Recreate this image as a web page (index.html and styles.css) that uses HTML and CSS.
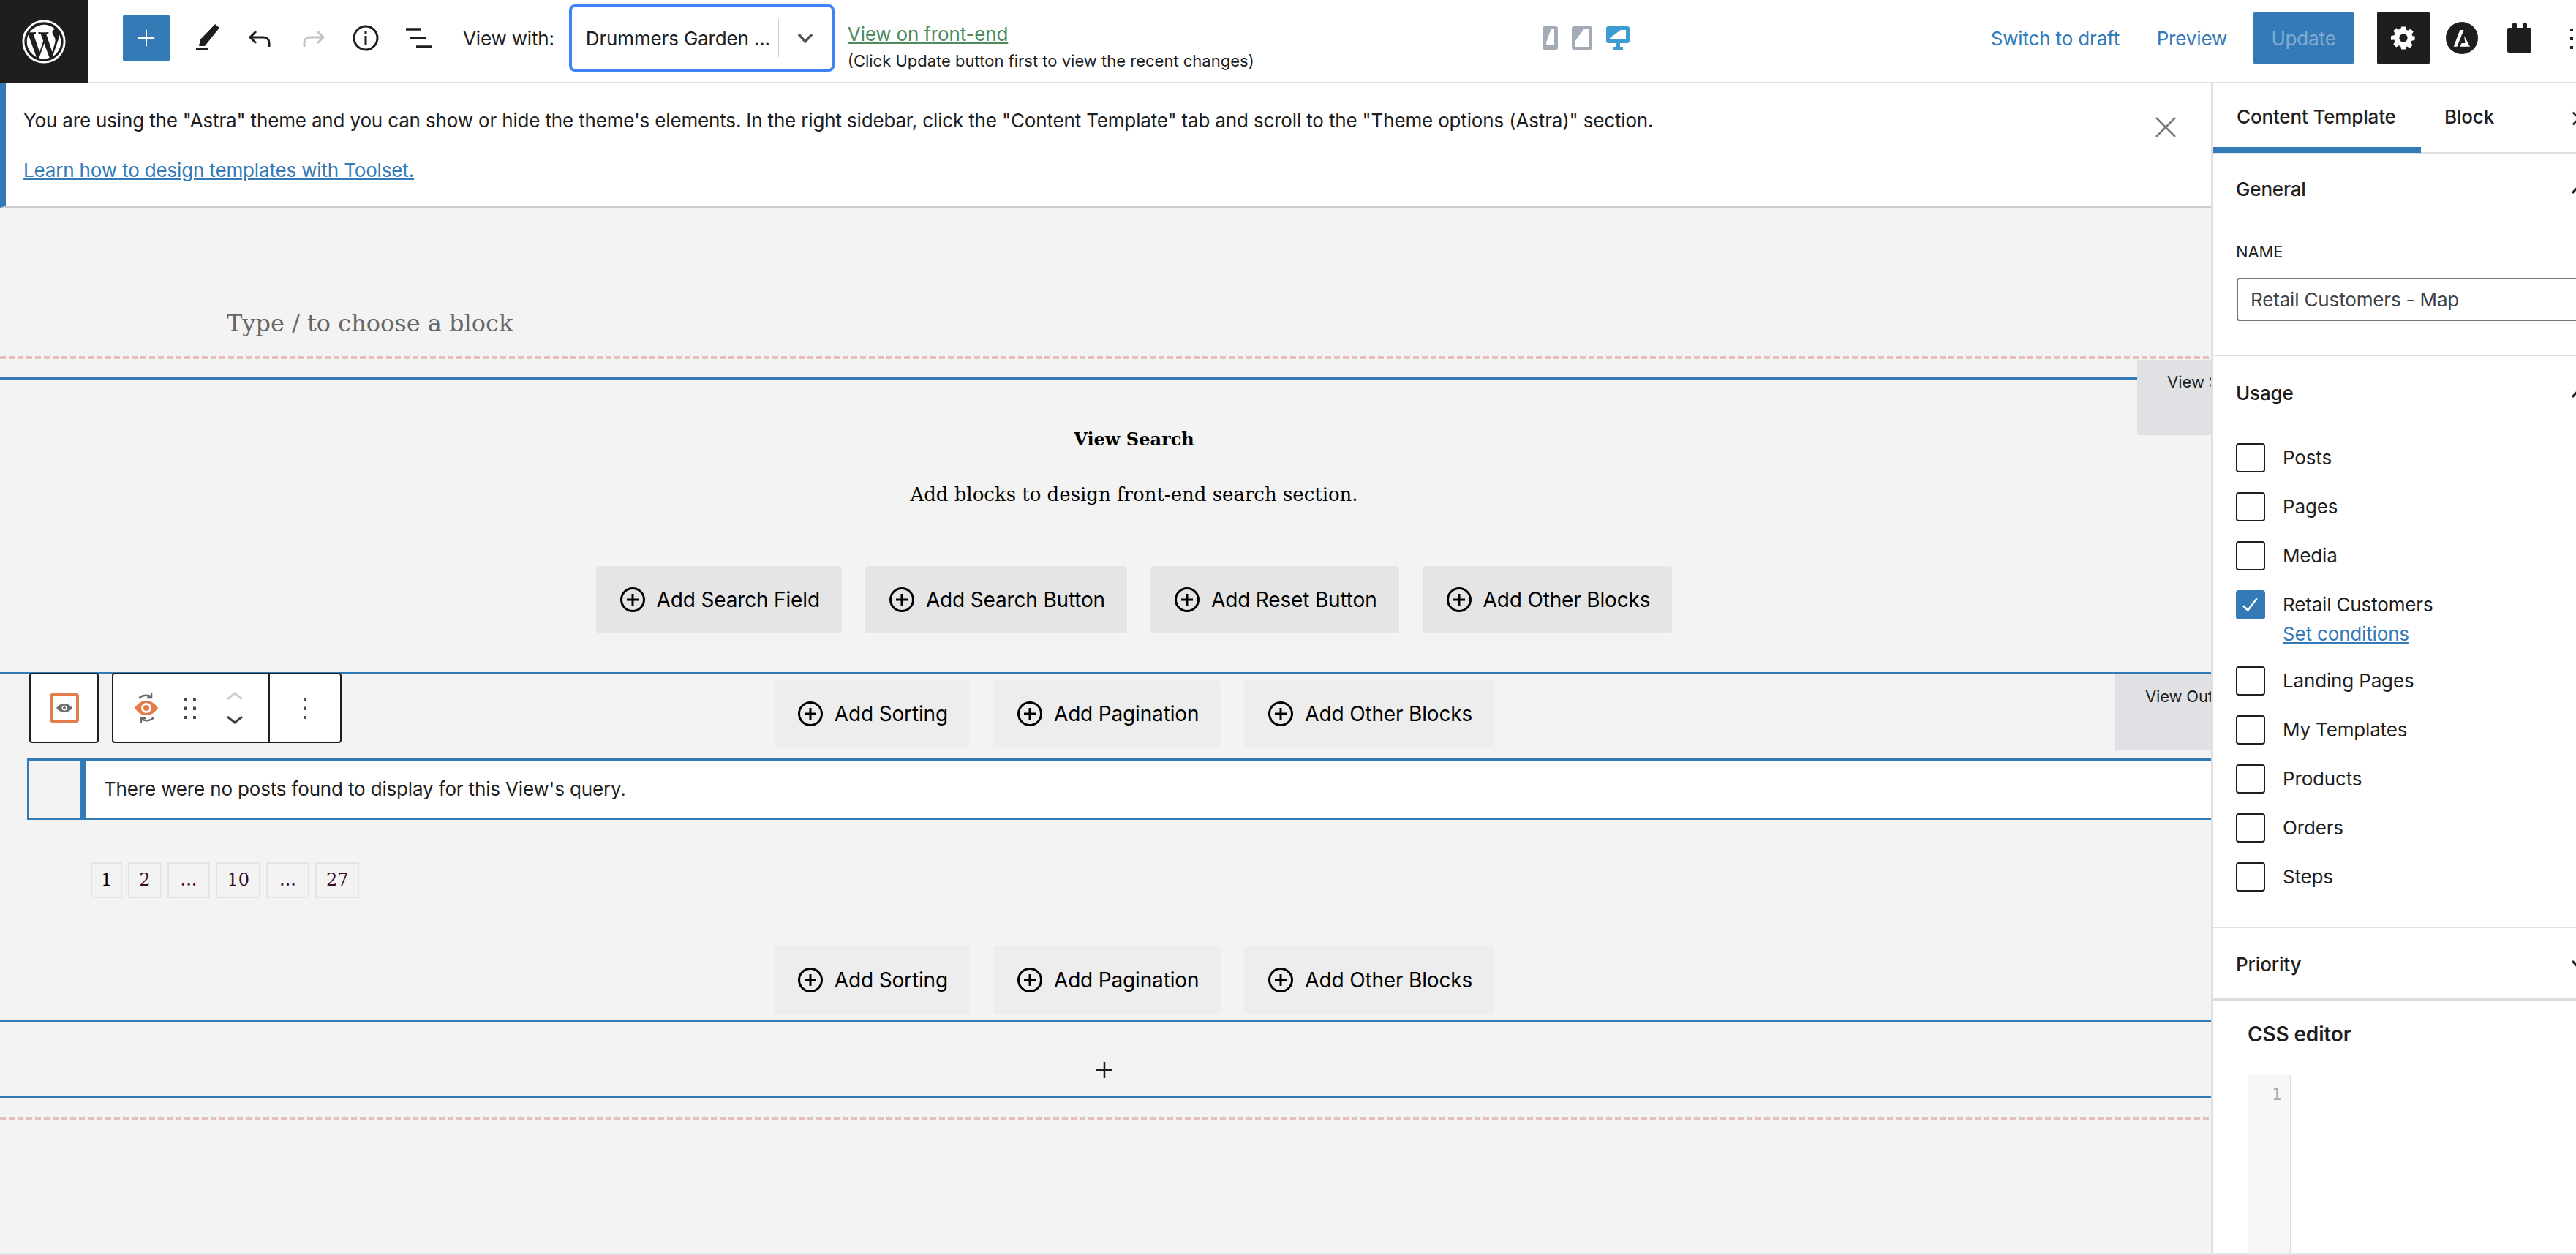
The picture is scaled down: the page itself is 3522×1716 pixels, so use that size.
FILE: index.html
```html
<!DOCTYPE html>
<html lang="en">
  <head>
    <meta charset="UTF-8" />
    <title>Edit Content Template</title>
    <link rel="stylesheet" href="styles.css">
  </head>
  <body>
    <div class="topbar">
      <a class="wp-logo" href="#">
        <svg viewBox="0 0 64 64" width="62" height="62"><circle cx="32" cy="32" r="29" fill="none" stroke="#fff" stroke-width="3"/><path fill="#fff" d="M8 32c0 9.5 5.5 17.700 13.500 21.600L10 22.300C8.700 25.300 8 28.600 8 32zm40.200-1.200c0-3-1.100-5-2-6.600-1.200-2-2.300-3.600-2.300-5.600 0-2.200 1.700-4.200 4-4.200h.3A24 24 0 0 0 11.900 19l1.500-.1c2.500 0 6.400-.3 6.400-.3 1.300-.1 1.400 1.800.1 2 0 0-1.300.1-2.700.2l8.700 25.900 5.200-15.700-3.700-10.200c-1.300-.1-2.500-.2-2.500-.2-1.300-.1-1.100-2.100.2-2 0 0 4 .3 6.300.3 2.500 0 6.400-.3 6.400-.3 1.300-.1 1.400 1.800.1 2 0 0-1.300.1-2.700.2l8.600 25.700 2.400-8c1-3.300 1.800-5.700 1.800-7.700zM32.400 34.300 25.200 55.200a24 24 0 0 0 14.800-.4l-.2-.3-7.400-20.200zM53.100 20.700c.1.800.2 1.600.2 2.500 0 2.400-.5 5.200-1.800 8.600L44.200 53a24 24 0 0 0 8.900-32.300z"/></svg>
      </a>
      <button class="add-btn">
        <svg viewBox="0 0 24 24" width="30" height="30"><path d="M12 3v18M3 12h18" stroke="#fff" stroke-width="1.600" fill="none"/></svg>
      </button>
      <svg class="tool pen" viewBox="0 0 32 36" width="32" height="36"><path fill="#1e1e1e" d="M26 0l6 5-20 25H4l2-9zM0 33h17v3H0z"/></svg>
      <svg class="tool undo" viewBox="0 0 34 24" width="34" height="24"><path d="M11 2 3 10l8 8M3 10h18c5 0 8 3 8 8v5" fill="none" stroke="#1e1e1e" stroke-width="3"/></svg>
      <svg class="tool redo" viewBox="0 0 34 24" width="34" height="24"><path d="M23 2l8 8-8 8M31 10H13c-5 0-8 3-8 8v5" fill="none" stroke="#c4c4c4" stroke-width="3"/></svg>
      <svg class="tool info" viewBox="0 0 36 36" width="36" height="36"><circle cx="18" cy="18" r="16" fill="none" stroke="#1e1e1e" stroke-width="3"/><path d="M18 15v12M18 8v4" stroke="#1e1e1e" stroke-width="3"/></svg>
      <svg class="tool list" viewBox="0 0 36 28" width="36" height="28"><path d="M0 2h21M6 14h21M14 26h22" stroke="#1e1e1e" stroke-width="3.500"/></svg>
      <span class="view-with">View with:</span>
      <div class="view-select">
        <span class="view-select-text">Drummers Garden ...</span>
        <span class="view-select-arrow">
          <svg viewBox="0 0 24 16" width="24" height="16"><path d="M3 3l9 10 9-10" fill="none" stroke="#555" stroke-width="3.500"/></svg>
        </span>
      </div>
      <div class="frontend-note">
        <a href="#">View on front-end</a>
        <span>(Click Update button first to view the recent changes)</span>
      </div>
      <div class="devices">
        <svg viewBox="0 0 21 32" width="21" height="32"><rect width="21" height="32" rx="3" fill="#a3acb6"/><rect x="5" y="3" width="11" height="23" fill="#fff"/><path d="M5 3h7L5 22z" fill="#a3acb6"/></svg>
        <svg viewBox="0 0 28 32" width="28" height="32"><rect width="28" height="32" rx="3" fill="#a3acb6"/><rect x="4" y="3" width="20" height="25" fill="#fff"/><path d="M4 3h13L4 21z" fill="#a3acb6"/></svg>
        <svg viewBox="0 0 32 32" width="32" height="32"><rect width="32" height="23" rx="3" fill="#3d9cd2"/><rect x="5" y="5" width="22" height="13" fill="#fff"/><path d="M5 5h15L5 16z" fill="#3d9cd2"/><path d="M13 23h6v5h4v4H9v-4h4z" fill="#3d9cd2"/></svg>
      </div>
      <a class="top-link draft" href="#">Switch to draft</a>
      <a class="top-link preview" href="#">Preview</a>
      <button class="update-btn">Update</button>
      <button class="gear-btn">
        <svg viewBox="0 0 24 24" width="34" height="34"><path fill="#fff" fill-rule="evenodd" d="M10 2h4l.6 2.900 1.800.8 2.500-1.600 2.800 2.800-1.600 2.500.8 1.800L23 11v4l-2.900.6-.8 1.800 1.600 2.500-2.800 2.800-2.500-1.600-.6.300L14 24h-4l-.6-2.900-1.800-.8-2.500 1.600-2.800-2.800 1.600-2.500-.8-1.800L0 15v-4l3.100-.6.800-1.800-1.600-2.500 2.800-2.800 2.500 1.600 1.800-.8zM12 9a4 4 0 1 0 0 8 4 4 0 0 0 0-8z" transform="translate(0 -1)"/></svg>
      </button>
      <svg class="astra" viewBox="0 0 44 44" width="44" height="44"><circle cx="22" cy="22" r="22" fill="#1e1e1e"/><path fill="#fff" d="M19.300 11h5.200L15.500 33.800h-4.800zM25 19l8 14.800H19.500l2-4.800h5z"/></svg>
      <svg class="plugin" viewBox="0 0 33 40" width="33" height="40"><path fill="#1e1e1e" d="M7 2a3 3 0 0 1 6 0v4h8V2a3 3 0 0 1 6 0v4h4a2 2 0 0 1 2 2v30a2 2 0 0 1-2 2H2a2 2 0 0 1-2-2V8a2 2 0 0 1 2-2h5z"/></svg>
      <svg class="more" viewBox="0 0 4 28" width="4" height="28"><path fill="#1e1e1e" d="M0 0h4v4H0zM0 12h4v4H0zM0 24h4v4H0z"/></svg>
    </div>

    <div class="layout">
      <div class="canvas">
        <div class="notice">
          <p>You are using the "Astra" theme and you can show or hide the theme's elements. In the right sidebar, click the "Content Template" tab and scroll to the "Theme options (Astra)" section.</p>
          <a href="#">Learn how to design templates with Toolset.</a>
          <svg class="notice-close" viewBox="0 0 30 30" width="30" height="30"><path d="M2 2l26 26M28 2 2 28" stroke="#777" stroke-width="2.500"/></svg>
        </div>

        <div class="placeholder">Type / to choose a block</div>
        <div class="dashed first"></div>

        <div class="search-section">
          <span class="section-tab tab-search">View Search</span>
          <h4>View Search</h4>
          <p>Add blocks to design front-end search section.</p>
          <div class="btn-row">
            <button class="add-block"><svg viewBox="0 0 36 36" width="36" height="36"><circle cx="18" cy="18" r="15.500" fill="none" stroke="#000" stroke-width="3"/><path d="M18 10v16M10 18h16" stroke="#000" stroke-width="3"/></svg>Add Search Field</button>
            <button class="add-block"><svg viewBox="0 0 36 36" width="36" height="36"><circle cx="18" cy="18" r="15.500" fill="none" stroke="#000" stroke-width="3"/><path d="M18 10v16M10 18h16" stroke="#000" stroke-width="3"/></svg>Add Search Button</button>
            <button class="add-block"><svg viewBox="0 0 36 36" width="36" height="36"><circle cx="18" cy="18" r="15.500" fill="none" stroke="#000" stroke-width="3"/><path d="M18 10v16M10 18h16" stroke="#000" stroke-width="3"/></svg>Add Reset Button</button>
            <button class="add-block"><svg viewBox="0 0 36 36" width="36" height="36"><circle cx="18" cy="18" r="15.500" fill="none" stroke="#000" stroke-width="3"/><path d="M18 10v16M10 18h16" stroke="#000" stroke-width="3"/></svg>Add Other Blocks</button>
          </div>
        </div>

        <div class="output-section">
          <span class="section-tab tab-output">View Output</span>

          <div class="block-toolbar">
            <div class="tb-group tb-one">
              <svg viewBox="0 0 40 40" width="40" height="40"><rect x="2" y="2" width="36" height="36" rx="2" fill="none" stroke="#e37c4a" stroke-width="4"/><path d="M9 20c3-4 7-6 11-6s8 2 11 6c-3 4-7 6-11 6s-8-2-11-6z" fill="#6b6b6b"/><circle cx="20" cy="20" r="3.500" fill="#fff"/><circle cx="20" cy="20" r="2" fill="#6b6b6b"/></svg>
            </div>
            <div class="tb-group tb-two">
              <div class="tb-main">
                <svg viewBox="0 0 32 40" width="32" height="40"><path d="M6 7c3-4 11-6 17-2M23 0v6h-6" fill="none" stroke="#6b6b6b" stroke-width="2.500"/><path d="M26 33c-3 4-11 6-17 2M9 40v-6h6" fill="none" stroke="#6b6b6b" stroke-width="2.500"/><path d="M0 20c5-7 10-10 16-10s11 3 16 10c-5 7-10 10-16 10S5 27 0 20z" fill="#e37c4a"/><circle cx="16" cy="20" r="7" fill="#fff"/><circle cx="16" cy="20" r="4" fill="#e37c4a"/></svg>
                <svg class="drag" viewBox="0 0 16 29" width="16" height="29"><path fill="#4a4a4a" d="M0 0h4v4.500H0zM12 0h4v4.500h-4zM0 12.500h4V17H0zM12 12.500h4V17h-4zM0 25h4v4H0zM12 25h4v4h-4z"/></svg>
                <div class="mover">
                  <svg viewBox="0 0 22 11" width="22" height="11"><path d="M1 10l10-8 10 8" fill="none" stroke="#ccc" stroke-width="3"/></svg>
                  <svg viewBox="0 0 22 11" width="22" height="11"><path d="M1 1l10 8 10-8" fill="none" stroke="#3d4450" stroke-width="3"/></svg>
                </div>
              </div>
              <div class="tb-more">
                <svg viewBox="0 0 4 29" width="4" height="29"><path fill="#4a4a4a" d="M0 0h4v4.500H0zM0 12.500h4V17H0zM0 25h4v4H0z"/></svg>
              </div>
            </div>
          </div>

          <div class="btn-row light">
            <button class="add-block"><svg viewBox="0 0 36 36" width="36" height="36"><circle cx="18" cy="18" r="15.500" fill="none" stroke="#000" stroke-width="3"/><path d="M18 10v16M10 18h16" stroke="#000" stroke-width="3"/></svg>Add Sorting</button>
            <button class="add-block"><svg viewBox="0 0 36 36" width="36" height="36"><circle cx="18" cy="18" r="15.500" fill="none" stroke="#000" stroke-width="3"/><path d="M18 10v16M10 18h16" stroke="#000" stroke-width="3"/></svg>Add Pagination</button>
            <button class="add-block"><svg viewBox="0 0 36 36" width="36" height="36"><circle cx="18" cy="18" r="15.500" fill="none" stroke="#000" stroke-width="3"/><path d="M18 10v16M10 18h16" stroke="#000" stroke-width="3"/></svg>Add Other Blocks</button>
          </div>

          <div class="no-posts">
            <div class="no-posts-side"></div>
            <div class="no-posts-text">There were no posts found to display for this View's query.</div>
          </div>

          <ul class="pagination">
            <li class="current">1</li>
            <li>2</li>
            <li class="dots">...</li>
            <li>10</li>
            <li class="dots">...</li>
            <li>27</li>
          </ul>

          <div class="btn-row light">
            <button class="add-block"><svg viewBox="0 0 36 36" width="36" height="36"><circle cx="18" cy="18" r="15.500" fill="none" stroke="#000" stroke-width="3"/><path d="M18 10v16M10 18h16" stroke="#000" stroke-width="3"/></svg>Add Sorting</button>
            <button class="add-block"><svg viewBox="0 0 36 36" width="36" height="36"><circle cx="18" cy="18" r="15.500" fill="none" stroke="#000" stroke-width="3"/><path d="M18 10v16M10 18h16" stroke="#000" stroke-width="3"/></svg>Add Pagination</button>
            <button class="add-block"><svg viewBox="0 0 36 36" width="36" height="36"><circle cx="18" cy="18" r="15.500" fill="none" stroke="#000" stroke-width="3"/><path d="M18 10v16M10 18h16" stroke="#000" stroke-width="3"/></svg>Add Other Blocks</button>
          </div>
        </div>

        <div class="appender">
          <svg viewBox="0 0 22 22" width="22" height="22"><path d="M11 0v22M0 11h22" stroke="#1e1e1e" stroke-width="2.500"/></svg>
        </div>
        <div class="dashed last"></div>
      </div>

      <div class="sidebar">
        <div class="tabs">
          <span class="tab active">Content Template</span>
          <span class="tab">Block</span>
          <svg class="tabs-close" viewBox="0 0 24 24" width="20" height="20"><path d="M2 2l20 20M22 2 2 22" stroke="#1e1e1e" stroke-width="3"/></svg>
        </div>

        <div class="panel general">
          <div class="panel-head">General<svg viewBox="0 0 24 16" width="24" height="16"><path d="M3 13l9-10 9 10" fill="none" stroke="#1e1e1e" stroke-width="3"/></svg></div>
          <label class="field-label">NAME</label>
          <div class="name-input">Retail Customers - Map</div>
        </div>

        <div class="panel usage">
          <div class="panel-head">Usage<svg viewBox="0 0 24 16" width="24" height="16"><path d="M3 13l9-10 9 10" fill="none" stroke="#1e1e1e" stroke-width="3"/></svg></div>
          <ul class="check-list">
            <li><span class="box"></span>Posts</li>
            <li><span class="box"></span>Pages</li>
            <li><span class="box"></span>Media</li>
            <li class="has-link">
              <span class="box checked"><svg viewBox="0 0 24 24" width="30" height="30"><path d="M4 13l5 5 10-13" fill="none" stroke="#fff" stroke-width="2"/></svg></span>Retail Customers
              <a href="#">Set conditions</a>
            </li>
            <li><span class="box"></span>Landing Pages</li>
            <li><span class="box"></span>My Templates</li>
            <li><span class="box"></span>Products</li>
            <li><span class="box"></span>Orders</li>
            <li><span class="box"></span>Steps</li>
          </ul>
        </div>

        <div class="panel priority">
          <div class="panel-head">Priority<svg viewBox="0 0 24 16" width="24" height="16"><path d="M3 3l9 10 9-10" fill="none" stroke="#1e1e1e" stroke-width="3"/></svg></div>
        </div>

        <div class="css-editor">
          <h3>CSS editor</h3>
          <div class="code-area">
            <div class="gutter">1</div>
          </div>
        </div>
      </div>
    </div>
  </body>
</html>
```

FILE: styles.css
```css
* {
  box-sizing: border-box;
}

html, body {
  height: 100%;
}

body {
  margin: 0;
  overflow: hidden;
  display: flex;
  flex-direction: column;
  font-family: Inter, "Noto Sans", sans-serif;
  font-size: 26px;
  letter-spacing: -0.16px;
  color: #1e1e1e;
  background-color: #fff;
}

button {
  font-family: inherit;
  letter-spacing: inherit;
  border: none;
}

a {
  color: #337ab7;
}

/* Top bar */
.topbar {
  flex: 0 0 114px;
  min-height: 0;
  display: flex;
  align-items: flex-start;
  width: 3522px;
  background-color: #fff;
  border-bottom: 2px solid #e0e0e0;
}

.wp-logo {
  flex: 0 0 120px;
  height: 114px;
  background-color: #1e1e1e;
  display: flex;
  align-items: center;
  justify-content: center;
}

.add-btn {
  flex: 0 0 64px;
  height: 64px;
  margin: 20px 0 0 48px;
  padding: 0;
  border-radius: 3px;
  background-color: #337ab7;
  display: flex;
  align-items: center;
  justify-content: center;
}

.tool {
  flex: none;
}

.pen {
  margin: 33px 0 0 36px;
}

.undo {
  margin: 41px 0 0 39px;
}

.redo {
  margin: 41px 0 0 38px;
}

.info {
  margin: 34px 0 0 37px;
}

.list {
  margin: 38px 0 0 37px;
}

.view-with {
  flex: 0 0 122px;
  margin: 37px 0 0 42px;
  line-height: 32px;
  white-space: nowrap;
}

.view-select {
  flex: 0 0 363px;
  height: 92px;
  margin: 6px 0 0 20px;
  border: 4px solid #3f83f8;
  border-radius: 8px;
  display: flex;
  align-items: center;
  padding-left: 19px;
}

.view-select-text {
  flex: 0 0 263px;
  white-space: nowrap;
}

.view-select-arrow {
  flex: 1;
  height: 52px;
  border-left: 1px solid #ccc;
  display: flex;
  align-items: center;
  justify-content: center;
}

.frontend-note {
  flex: 0 0 555px;
  margin: 30px 0 0 18px;
  display: flex;
  flex-direction: column;
  align-items: flex-start;
  gap: 7px;
}

.frontend-note a {
  color: #4f8a5f;
  line-height: 33px;
}

.frontend-note span {
  font-size: 22px;
  letter-spacing: 0;
  line-height: 26px;
  white-space: nowrap;
}

.devices {
  flex: none;
  display: flex;
  gap: 19px;
  margin: 36px 0 0 394px;
}

.top-link {
  text-decoration: none;
  line-height: 32px;
  margin-top: 37px;
  white-space: nowrap;
}

.draft {
  flex: 0 0 178px;
  margin-left: 494px;
}

.preview {
  flex: 0 0 92px;
  margin-left: 49px;
}

.update-btn {
  flex: 0 0 137px;
  height: 72px;
  margin: 16px 0 0 36px;
  border-radius: 3px;
  background-color: #337ab7;
  color: rgba(255, 255, 255, 0.4);
  font-size: 26px;
}

.gear-btn {
  flex: 0 0 72px;
  height: 72px;
  margin: 16px 0 0 32px;
  padding: 0;
  border-radius: 3px;
  background-color: #1e1e1e;
  display: flex;
  align-items: center;
  justify-content: center;
}

.astra {
  flex: none;
  margin: 30px 0 0 22px;
}

.plugin {
  flex: none;
  margin: 32px 0 0 40px;
}

.more {
  flex: none;
  margin: 39px 0 0 53px;
}

/* Main area */
.layout {
  flex: 1;
  display: flex;
  min-height: 0;
  border-bottom: 3px solid #e4e4e4;
}

.canvas {
  flex: 0 0 3023px;
  overflow: hidden;
  background-color: #f3f3f3;
}

.notice {
  position: relative;
  height: 170px;
  background-color: #fff;
  border-left: 8px solid #337ab7;
  border-bottom: 3px solid #ccc;
  padding: 34px 0 0 24px;
}

.notice p {
  margin: 0 0 34px 0;
  line-height: 34px;
}

.notice a {
  line-height: 34px;
}

.notice-close {
  position: absolute;
  top: 45px;
  right: 47px;
}

.placeholder {
  margin: 138px 0 0 310px;
  font-family: "DejaVu Serif", serif;
  font-size: 32px;
  letter-spacing: 0;
  line-height: 40px;
  color: #666;
}

.dashed {
  height: 4px;
  background-image: repeating-linear-gradient(90deg, #e8bfb8 0 8px, transparent 8px 12px);
}

.dashed.first {
  margin-top: 25px;
}

.search-section {
  position: relative;
  margin-top: 25px;
  height: 403px;
  padding-left: 78px;
  border-top: 3px solid #337ab7;
  text-align: center;
  font-family: "DejaVu Serif", serif;
  letter-spacing: 0;
  color: #000;
}

.search-section h4 {
  margin: 0;
  padding-top: 66px;
  font-size: 24px;
  line-height: 32px;
}

.search-section p {
  margin: 43px 0 0;
  font-size: 26px;
  line-height: 32px;
}

.btn-row {
  display: flex;
  justify-content: center;
  gap: 32px;
  font-family: Inter, "Noto Sans", sans-serif;
}

.btn-row.light {
  padding-left: 78px;
}

.search-section .btn-row {
  margin-top: 82px;
}

.add-block {
  height: 92px;
  padding: 0 30px 0 32px;
  display: flex;
  align-items: center;
  gap: 15px;
  border-radius: 4px;
  background-color: #e6e5e6;
  color: #000;
  font-size: 28px;
  letter-spacing: -0.16px;
  white-space: nowrap;
}

.light .add-block {
  background-color: #ededee;
}

.output-section {
  position: relative;
  height: 476px;
  border-top: 3px solid #337ab7;
  padding-top: 8px;
}

.section-tab {
  position: absolute;
  height: 103px;
  overflow: hidden;
  background-color: #e0e1e5;
  color: #1e1e1e;
  font-family: Inter, "Noto Sans", sans-serif;
  font-size: 22px;
  font-weight: 400;
  line-height: 28px;
  white-space: nowrap;
  padding: 16px 0 0 41px;
  text-align: left;
}

.tab-search {
  top: -27px;
  left: 2922px;
  width: 101px;
}

.tab-output {
  top: 0;
  left: 2892px;
  width: 131px;
}

/* Floating block toolbar */
.block-toolbar {
  position: absolute;
  top: -2px;
  left: 40px;
  display: flex;
  gap: 18px;
  height: 96px;
}

.tb-group {
  display: flex;
  background-color: #fff;
  border: 2px solid #1e1e1e;
  border-radius: 4px;
}

.tb-one {
  width: 95px;
  align-items: center;
  justify-content: center;
}

.tb-two {
  width: 314px;
}

.tb-main {
  flex: 0 0 214px;
  display: flex;
  align-items: center;
  border-right: 2px solid #1e1e1e;
  padding-left: 29px;
}

.drag {
  margin-left: 36px;
}

.mover {
  display: flex;
  flex-direction: column;
  gap: 22px;
  margin-left: 42px;
}

.tb-more {
  flex: 1;
  display: flex;
  align-items: center;
  justify-content: center;
}

.no-posts {
  display: flex;
  height: 84px;
  margin: 15px 0 0 37px;
  border: 3px solid #337ab7;
  border-right: none;
}

.no-posts-side {
  flex: 0 0 78px;
  border-right: 8px solid #337ab7;
}

.no-posts-text {
  flex: 1;
  background-color: #fff;
  padding-left: 24px;
  line-height: 78px;
}

.pagination {
  list-style: none;
  display: flex;
  gap: 8px;
  margin: 58px 0 66px 124px;
  padding: 0;
  font-family: "DejaVu Serif", serif;
  font-size: 24px;
  letter-spacing: 0;
  color: #3d0a26;
}

.pagination li {
  height: 49px;
  padding: 0 13px;
  border: 2px solid #e1e4e8;
  line-height: 45px;
}

.pagination .current {
  padding: 0 12px;
  color: #000;
}

.pagination .dots {
  padding: 0 16px;
}

.appender {
  height: 107px;
  border-top: 3px solid #337ab7;
  border-bottom: 3px solid #337ab7;
  display: flex;
  align-items: center;
  justify-content: center;
  padding: 28px 3px 0 0;
}

.dashed.last {
  margin-top: 25px;
}

/* Sidebar */
.sidebar {
  flex: 0 0 499px;
  overflow: hidden;
  background-color: #fff;
  border-left: 3px solid #e0e0e0;
}

.tabs {
  position: relative;
  height: 96px;
  display: flex;
  border-bottom: 2px solid #e0e0e0;
}

.tab {
  padding: 0 32px;
  line-height: 92px;
  font-weight: 500;
}

.tab.active {
  flex: 0 0 284px;
  padding: 0 0 0 32px;
  height: 95px;
  border-bottom: 8px solid #337ab7;
}

.tabs-close {
  position: absolute;
  top: 38px;
  left: 490px;
}

.panel {
  border-bottom: 2px solid #e0e0e0;
  padding: 0 0 0 31px;
}

.panel-head {
  position: relative;
  font-weight: 500;
  line-height: 32px;
}

.panel-head svg {
  position: absolute;
  top: 8px;
  left: 457px;
}

.general {
  height: 277px;
  padding-top: 33px;
}

.field-label {
  display: block;
  margin-top: 55px;
  font-size: 22px;
  line-height: 28px;
}

.name-input {
  width: 600px;
  height: 59px;
  margin: 22px 0 0 1px;
  padding-left: 17px;
  border: 2px solid #757575;
  border-radius: 4px;
  color: #3c434a;
  line-height: 55px;
}

.usage {
  height: 782px;
  padding-top: 35px;
}

.check-list {
  list-style: none;
  margin: 38px 0 0 0;
  padding: 0;
}

.check-list li {
  display: flex;
  align-items: center;
  height: 67px;
  font-size: 26px;
}

.check-list .has-link {
  position: relative;
  height: 104px;
  align-items: flex-start;
  padding-top: 14px;
  line-height: 40px;
}

.check-list .has-link a {
  position: absolute;
  left: 64px;
  top: 57px;
  line-height: 34px;
}

.box {
  flex: 0 0 40px;
  height: 40px;
  margin-right: 24px;
  border: 2px solid #1e1e1e;
  border-radius: 4px;
  display: flex;
  align-items: center;
  justify-content: center;
}

.box.checked {
  background-color: #337ab7;
  border-color: #337ab7;
}

.priority {
  height: 100px;
  padding-top: 34px;
  border-bottom: 4px solid #ddd;
}

.css-editor {
  padding: 27px 0 0 47px;
}

.css-editor h3 {
  margin: 0;
  font-size: 28px;
  font-weight: 600;
  line-height: 36px;
}

.code-area {
  margin-top: 38px;
  height: 260px;
}

.gutter {
  width: 60px;
  height: 100%;
  padding: 10px 12px 0 0;
  background-color: #f6f6f6;
  border-right: 2px solid #ddd;
  color: #aaa;
  font-family: "DejaVu Sans Mono", monospace;
  font-size: 22px;
  line-height: 34px;
  text-align: right;
}
```
